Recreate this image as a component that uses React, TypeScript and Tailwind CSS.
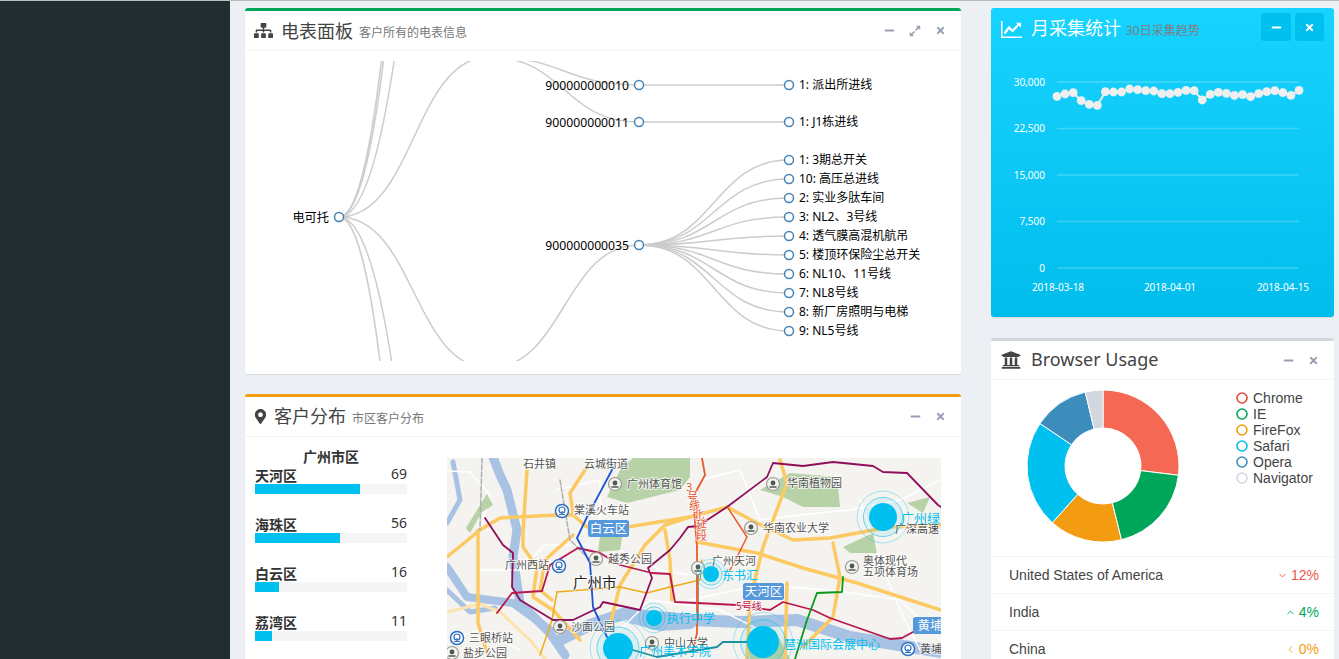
import React from 'react';
import { FaSitemap, FaMapMarkerAlt, FaUniversity, FaMinus, FaTimes, FaExpandAlt } from 'react-icons/fa';
import { ChevronDown, ChevronUp, ChevronLeft } from 'lucide-react';

const yahei = "[font-family:'Noto_Sans','Noto_Sans_CJK_SC',sans-serif]";

const leafRows = [
  { y: 160, label: '1: 3期总开关' },
  { y: 179, label: '10: 高压总进线' },
  { y: 198, label: '2: 实业多肽车间' },
  { y: 217, label: '3: NL2、3号线' },
  { y: 236, label: '4: 透气膜高混机航吊' },
  { y: 255, label: '5: 楼顶环保险尘总开关' },
  { y: 274, label: '6: NL10、11号线' },
  { y: 293, label: '7: NL8号线' },
  { y: 312, label: '8: 新厂房照明与电梯' },
  { y: 331, label: '9: NL5号线' },
];

const curve = (x1: number, y1: number, x2: number, y2: number) => {
  const mid = (x1 + x2) / 2;
  return `M${x1},${y1} C${mid},${y1} ${mid},${y2} ${x2},${y2}`;
};

function TreeNode({ x, y, label, leaf }: { x: number; y: number; label: string; leaf?: boolean }) {
  return (
    <g>
      <circle cx={x} cy={y} r={4.5} fill="#fff" stroke="#4682b4" strokeWidth={1.5} />
      <text x={leaf ? x + 10 : x - 10} y={leaf ? y + 4 : y + 4.5} textAnchor={leaf ? 'start' : 'end'} fontSize={leaf ? 12 : 12.2} fill="#000">
        {label}
      </text>
    </g>
  );
}

function MeterTree() {
  const links = [
    curve(339, 217, 489, -897),
    curve(339, 217, 489, -783),
    curve(339, 217, 489, -395),
    curve(339, 217, 489, 57),
    curve(339, 217, 489, 368),
    curve(339, 217, 489, 1333),
    curve(339, 217, 489, 846),
    curve(489, 57, 639, 85),
    curve(489, 57, 639, 122),
    curve(489, 368, 639, 245),
    curve(639, 85, 789, 85),
    curve(639, 122, 789, 122),
    ...leafRows.map((r) => curve(639, 245, 789, r.y)),
  ];
  return (
    <svg viewBox="245 61 716 300" className="block w-[716px] h-[300px]">
      {links.map((d) => (
        <path key={d} d={d} fill="none" stroke="#ccc" strokeWidth={1.5} />
      ))}
      <TreeNode x={339} y={217} label="电可托" />
      <TreeNode x={639} y={85} label="900000000010" />
      <TreeNode x={639} y={122} label="900000000011" />
      <TreeNode x={639} y={245} label="900000000035" />
      <TreeNode x={789} y={85} label="1: 派出所进线" leaf />
      <TreeNode x={789} y={122} label="1: J1栋进线" leaf />
      {leafRows.map((r) => (
        <TreeNode key={r.y} x={789} y={r.y} label={r.label} leaf />
      ))}
    </svg>
  );
}

function MapLabel({ x, y, text, size = 11, fill = '#555' }: { x: number; y: number; text: string; size?: number; fill?: string }) {
  return (
    <text x={x} y={y + size * 0.36} fontSize={size} fill={fill} stroke="#fff" strokeWidth={2} strokeOpacity={0.75} paintOrder="stroke">
      {text}
    </text>
  );
}

function Rail({ x, y }: { x: number; y: number }) {
  return (
    <g>
      <circle cx={x} cy={y} r={6.5} fill="#fff" stroke="#2f6fc4" strokeWidth={1.5} />
      <circle cx={x} cy={y - 1} r={3} fill="none" stroke="#2f6fc4" strokeWidth={1.2} />
      <path d={`M${x - 3},${y + 3.5} h6 M${x},${y} v3`} stroke="#2f6fc4" strokeWidth={1.2} />
    </g>
  );
}

function Poi({ x, y }: { x: number; y: number }) {
  return (
    <g>
      <circle cx={x} cy={y} r={6.5} fill="#f3f2ef" stroke="#9a9a96" strokeWidth={1.2} />
      <circle cx={x} cy={y - 1} r={2.4} fill="#4e5a4e" />
      <path d={`M${x - 3.5},${y + 3} h7`} stroke="#4e5a4e" strokeWidth={1.5} />
    </g>
  );
}

function AreaTag({ x, y, w, text }: { x: number; y: number; w: number; text: string }) {
  return (
    <g>
      <rect x={x} y={y} width={w} height={17} rx={2.5} fill="#5598db" />
      <text x={x + w / 2} y={y + 13} textAnchor="middle" fontSize={12.5} fill="#fff">
        {text}
      </text>
    </g>
  );
}

function Pulse({ x, y, r, label, lx, ly, size = 12 }: { x: number; y: number; r: number; label: string; lx: number; ly: number; size?: number }) {
  return (
    <g>
      <circle cx={x} cy={y} r={r * 1.85} fill="none" stroke="#00c0ef" strokeOpacity={0.35} strokeWidth={1} />
      <circle cx={x} cy={y} r={r * 1.4} fill="#00c0ef" fillOpacity={0.1} stroke="#00c0ef" strokeOpacity={0.55} strokeWidth={1} />
      <circle cx={x} cy={y} r={r} fill="#00c0ef" />
      <text x={lx} y={ly + 4.5} fontSize={size} fill="#00c0ef">
        {label}
      </text>
    </g>
  );
}

function CityMap() {
  return (
    <svg viewBox="447 458 494 201" className="block w-[494px] h-[201px] bg-[#f4f3f0]">
      <g fill="none" strokeLinejoin="round" strokeLinecap="round">
        {/* rivers */}
        <g stroke="#a8c2e3">
          <polyline strokeWidth={9} points="493,457 500,475 507,490 517,530 513,557 520,603 550,633 565,655" />
          <polyline strokeWidth={5} points="453,462 460,500 447,523" />
          <polyline strokeWidth={8} points="447,567 467,597 513,603 550,630" />
          <polyline strokeWidth={5} points="447,590 470,612 495,608" />
          <polyline strokeWidth={12} points="560,640 590,625 623,614 690,620 740,622 797,620 850,637 941,652" />
          <polyline strokeWidth={14} points="634,617 660,624 690,622" />
        </g>
        {/* white streets */}
        <g stroke="#ffffff" strokeWidth={1.5}>
          <polyline points="447,471 470,472 490,495 480,530" />
          <polyline points="480,570 520,570 545,545 590,545" />
          <polyline points="447,640 480,630 500,640 520,650" />
          <polyline points="555,490 600,480 600,540 660,570 720,580" />
          <polyline points="700,480 740,470 760,520 800,515 850,510 900,500 941,480" />
          <polyline points="690,600 760,585 830,590 900,600 941,640" />
          <polyline points="860,500 880,560 900,610 920,650" />
          <polyline points="610,640 650,600 720,610 780,640" />
        </g>
      </g>
      {/* parks */}
      <g fill="#b7d2a7">
        <polygon points="487,494 493,505 482,512 470,533 466,528 477,510" />
        <polygon points="633,458 690,458 690,477 680,490 627,503 607,497 620,470" />
        <polygon points="760,490 790,473 837,477 840,507 803,507 783,497" />
        <polygon points="843,547 873,533 877,553 850,553" />
        <polygon points="907,503 930,497 923,513" />
        <polygon points="600,535 625,520 620,550 598,552" />
        <polygon points="745,640 775,630 790,659 750,659" />
      </g>
      <g fill="none" strokeLinejoin="round" strokeLinecap="round">
        {/* pale ring */}
        <polyline stroke="#fde3ad" strokeWidth={3} points="447,612 480,604 500,612 530,640 545,659" />
        {/* highways */}
        <g stroke="#fcc962" strokeWidth={3.5}>
          <polyline points="447,557 480,530 500,518 557,515 573,515 587,527 627,527 690,517 727,507 757,523 793,540 830,538 890,527 941,525" />
          <polyline points="697,542 757,553 803,568 857,583 941,610" />
          <polyline points="527,470 523,533 523,547 537,567 533,597 553,610 580,640" />
          <polyline points="478,530 478,623 487,653" />
          <polyline points="833,543 840,577 833,617 803,647" />
          <polyline points="587,467 570,493 573,513" />
          <polyline points="780,460 787,483 763,547 750,600 747,659" />
          <polyline points="787,583 785,659" />
          <polyline points="690,517 665,525 645,545 620,585 610,625" />
          <polyline points="573,535 545,560 540,590 552,600" />
          <polyline points="665,530 670,560 672,600" />
        </g>
        {/* rail */}
        <polyline stroke="#b0b0b0" strokeWidth={1.5} strokeDasharray="5 2" points="482,458 480,530" />
        <polyline stroke="#b0b0b0" strokeWidth={1.5} strokeDasharray="5 2" points="560,480 570,540 590,560" />
        <polyline stroke="#777" strokeWidth={1.5} points="698,573 698,620" />
        {/* metro */}
        <polyline stroke="#f0ab1a" strokeWidth={1.5} points="557,592 620,587 647,593 670,587 700,580 702,560" />
        <polyline stroke="#f0ab1a" strokeWidth={1.5} points="557,592 552,620 540,655" />
        <polyline stroke="#8f0f5c" strokeWidth={1.8} points="485,518 503,545 513,553 512,587 520,600 553,620 573,620 600,607 603,602 640,610 652,578 648,568 670,550 680,538 688,527 698,526 727,507 767,477 773,463 803,466 833,462 873,466 883,472 907,473 938,505 941,507" />
        <polyline stroke="#b9184f" strokeWidth={1.8} points="497,613 512,593 542,591 550,565 578,548 600,553 620,565 652,573 670,574 675,602 697,603 737,605 770,610 783,602 813,610 830,618 890,639 902,638 913,632" />
        <polyline stroke="#1a52d8" strokeWidth={1.8} points="613,468 587,517 577,538 590,563 593,607 607,637" />
        <polyline stroke="#ea5b2b" strokeWidth={1.8} points="702,458 705,475 693,497 697,547 697,633 693,650" />
        <polyline stroke="#ea5b2b" strokeWidth={1.5} points="728,508 747,537 737,557 730,570" />
        <polyline stroke="#0a9a1a" strokeWidth={1.8} points="843,577 842,592 817,593 807,620 795,659" />
        <polyline stroke="#1d8f99" strokeWidth={1.8} points="633,650 657,657 717,647 723,642 747,642" />
      </g>
      <Rail x={562} y={511} />
      <Rail x={559} y={566} />
      <Rail x={457} y={638} />
      <Rail x={908} y={649} />
      <Poi x={615} y={484} />
      <Poi x={773} y={484} />
      <Poi x={751} y={528} />
      <Poi x={698} y={568} />
      <Poi x={852} y={567} />
      <Poi x={596} y={559} />
      <Poi x={560} y={627} />
      <Poi x={652} y={643} />
      <Poi x={452} y={653} />
      <MapLabel x={523} y={464} text="石井镇" />
      <MapLabel x={584} y={464} text="云城街道" />
      <MapLabel x={627} y={484} text="广州体育馆" />
      <MapLabel x={574} y={510} text="棠溪火车站" />
      <MapLabel x={505} y={565} text="广州西站" />
      <MapLabel x={608} y={559} text="越秀公园" />
      <MapLabel x={571} y={627} text="沙面公园" />
      <MapLabel x={469} y={638} text="三眼桥站" />
      <MapLabel x={463} y={653} text="盐步公园" />
      <MapLabel x={787} y={483} text="华南植物园" />
      <MapLabel x={763} y={528} text="华南农业大学" />
      <MapLabel x={712} y={561} text="广州天河" />
      <MapLabel x={863} y={561} text="奥体现代" />
      <MapLabel x={863} y={572} text="五项体育场" />
      <MapLabel x={895} y={529} text="广深高速" size={11} fill="#444" />
      <MapLabel x={664} y={643} text="中山大学" />
      <MapLabel x={920} y={649} text="黄埔" />
      <MapLabel x={573} y={583} text="广州市" size={14.5} fill="#222" />
      <MapLabel x={736} y={606} text="5号线" size={10} fill="#b9184f" />
      {[
        [686, 491, '3'],
        [687, 501, '号'],
        [689, 510, '线'],
        [693, 519, '北'],
        [696, 529, '延'],
        [696, 540, '段'],
      ].map(([x, y, c]) => (
        <text key={c as string} x={x as number} y={y as number} fontSize={11} fill="#e4552a" stroke="#fff" strokeWidth={1.5} strokeOpacity={0.75} paintOrder="stroke">
          {c}
        </text>
      ))}
      <AreaTag x={588} y={520} w={41} text="白云区" />
      <AreaTag x={743} y={583} w={41} text="天河区" />
      <AreaTag x={913} y={617} w={34} text="黄埔" />
      <Pulse x={883} y={517} r={14} label="广州绿地" lx={901} ly={518} size={13} />
      <Pulse x={711} y={574} r={8} label="东书汇" lx={722} ly={575} />
      <Pulse x={654} y={618} r={8} label="执行中学" lx={667} ly={618} />
      <Pulse x={618} y={648} r={15} label="广州美术学院" lx={639} ly={651} />
      <Pulse x={763} y={642} r={16} label="琶洲国际会展中心" lx={784} ly={644} />
    </svg>
  );
}

const districts = [
  { name: '天河区', value: 69, width: 105 },
  { name: '海珠区', value: 56, width: 85 },
  { name: '白云区', value: 16, width: 24 },
  { name: '荔湾区', value: 11, width: 17 },
];

const trend = [79, 72, 68, 92, 103, 106, 65, 66, 66, 57, 59, 62, 63, 71, 71, 67, 61, 62, 90, 73, 67, 70, 76, 74, 80, 71, 65, 62, 68, 76, 61];

function MonthChart() {
  const points = trend.map((v, i) => [1057 + (i * 242) / 30, 70 + v / 3]);
  const grid = [
    { y: 82, label: '30,000' },
    { y: 128.5, label: '22,500' },
    { y: 175, label: '15,000' },
    { y: 221.5, label: '7,500' },
    { y: 268, label: '0' },
  ];
  return (
    <svg viewBox="991 51 343 266" className="block w-[343px] h-[266px]">
      {grid.map((g) => (
        <g key={g.y}>
          <line x1={1057} x2={1299} y1={g.y} y2={g.y} stroke="#fff" strokeOpacity={0.22} strokeWidth={1.5} />
          <text x={1045} y={g.y + 3.5} textAnchor="end" fontSize={10} fill="#fff">
            {g.label}
          </text>
        </g>
      ))}
      <polyline points={points.map((p) => p.join(',')).join(' ')} fill="none" stroke="#efefef" strokeWidth={2} />
      {points.map((p) => (
        <circle key={p[0]} cx={p[0]} cy={p[1]} r={4.4} fill="#efefef" />
      ))}
      <text x={1058} y={291} textAnchor="middle" fontSize={10} fill="#fff">2018-03-18</text>
      <text x={1170} y={291} textAnchor="middle" fontSize={10} fill="#fff">2018-04-01</text>
      <text x={1283} y={291} textAnchor="middle" fontSize={10} fill="#fff">2018-04-15</text>
    </svg>
  );
}

// thin-axis line chart glyph, the packaged one is heavier than the reference
function LineChartIcon() {
  return (
    <svg viewBox="0 0 21 17" className="w-[21px] h-[17px] mr-[9px]" fill="none" stroke="currentColor">
      <path d="M0.75 0 V16.25 H21" strokeWidth={1.5} />
      <path d="M3.5 12.5 L8 6.5 L11.5 10 L18 3" strokeWidth={2.2} />
      <path d="M15 1.8 H20 V6.8 Z" fill="currentColor" stroke="none" />
    </svg>
  );
}

const slices = [
  { label: 'Chrome', from: 0, to: 97, fill: '#f56954', ring: '#e0483e' },
  { label: 'IE', from: 97, to: 166, fill: '#00a65a', ring: '#00a65a' },
  { label: 'FireFox', from: 166, to: 221.8, fill: '#f39c12', ring: '#f39c12' },
  { label: 'Safari', from: 221.8, to: 304, fill: '#00c0ef', ring: '#00c0ef' },
  { label: 'Opera', from: 304, to: 346.5, fill: '#3c8dbc', ring: '#3c8dbc' },
  { label: 'Navigator', from: 346.5, to: 360, fill: '#d2d6de', ring: '#d2d6de' },
];

const polar = (r: number, deg: number) => {
  const a = (deg * Math.PI) / 180;
  return `${(r * Math.sin(a)).toFixed(2)},${(-r * Math.cos(a)).toFixed(2)}`;
};

const slicePath = (from: number, to: number) => {
  const big = to - from > 180 ? 1 : 0;
  return `M${polar(76, from)} A76,76 0 ${big} 1 ${polar(76, to)} L${polar(38, to)} A38,38 0 ${big} 0 ${polar(38, from)} Z`;
};

function Donut() {
  return (
    <svg viewBox="-78 -78 156 156" className="block w-[156px] h-[156px] shrink-0">
      {slices.map((s) => (
        <path key={s.label} d={slicePath(s.from, s.to)} fill={s.fill} stroke="#fff" strokeWidth={1} />
      ))}
    </svg>
  );
}

const countries = [
  { name: 'United States of America', pct: '12%', color: 'text-[#e8594b]', Icon: ChevronDown },
  { name: 'India', pct: '4%', color: 'text-[#00a65a]', Icon: ChevronUp },
  { name: 'China', pct: '0%', color: 'text-[#f39c12]', Icon: ChevronLeft },
];

function BoxTools({ expand }: { expand?: boolean }) {
  return (
    <div className="ml-auto flex items-center text-[#97a0b3]">
      <FaMinus size={11} className="mr-[14px]" />
      {expand && <FaExpandAlt size={12} className="mr-[14px]" />}
      <FaTimes size={11} />
    </div>
  );
}

export default function App() {
  return (
    <div className={`flex h-screen overflow-hidden bg-[#ecf0f5] border-t border-[#bbbbbb] text-[#333] ${yahei}`}>
      <aside className="w-[230px] shrink-0 bg-[#222d32]" />

      <main className="flex items-start pl-[15px] pt-[7px]">
        {/* left column */}
        <div className="w-[716px] shrink-0">
          <section className="bg-white rounded-[3px] border-t-[3px] border-[#00a65a] shadow-[0_1px_1px_rgba(0,0,0,0.1)]">
            <header className="h-[40px] flex items-center pl-[10px] pr-[15px] border-b border-[#f4f4f4]">
              <FaSitemap size={19} className="text-[#444] mr-[8px] -ml-[1px]" />
              <h3 className="text-[18px] leading-none text-[#444]">电表面板</h3>
              <small className="ml-[6px] mt-[4px] text-[12px] text-[#777]">客户所有的电表信息</small>
              <BoxTools expand />
            </header>
            <div className="pt-[10px] pb-[13px]">
              <MeterTree />
            </div>
          </section>

          <section className="mt-[20px] bg-white rounded-[3px] border-t-[3px] border-[#f39c12] shadow-[0_1px_1px_rgba(0,0,0,0.1)]">
            <header className="h-[40px] flex items-center pl-[10px] pr-[15px] border-b border-[#f4f4f4]">
              <FaMapMarkerAlt size={15} className="text-[#444] mr-[6px] -ml-[2px]" />
              <h3 className="text-[18px] leading-none text-[#444] -mt-[2px]">客户分布</h3>
              <small className="ml-[6px] mt-[4px] text-[12px] text-[#777]">市区客户分布</small>
              <BoxTools />
            </header>
            <div className="flex pl-[10px] pr-[20px] pb-[30px]">
              <div className="w-[152px] shrink-0 pt-[11px]">
                <div className="text-center text-[14px] leading-[18px] font-bold text-[#333]">广州市区</div>
                {districts.map((d) => (
                  <div key={d.name} className="mb-[21px]">
                    <div className="h-[18px] flex justify-between text-[#333]">
                      <span className="text-[14px] leading-[20px] font-bold">{d.name}</span>
                      <span className="text-[14px] leading-[16px]">{d.value}</span>
                    </div>
                    <div className="h-[10px] bg-[#f5f5f5]">
                      <div className="h-full bg-[#00c0ef]" style={{ width: d.width }} />
                    </div>
                  </div>
                ))}
              </div>
              <div className="ml-[40px] pt-[21px]">
                <CityMap />
              </div>
            </div>
          </section>
        </div>

        {/* right column */}
        <div className="w-[343px] shrink-0 ml-[30px]">
          <section className="rounded-[3px] bg-gradient-to-b from-[#17d3ff] to-[#00bdec] shadow-[0_1px_1px_rgba(0,0,0,0.1)]">
            <header className="h-[43px] flex items-center pl-[10px] pr-[10px] text-white">
              <LineChartIcon />
              <h3 className="text-[18px] leading-none -mt-[4px]">月采集统计</h3>
              <small className="ml-[5px] mt-[2px] text-[12px] text-[#7d7d82]">30日采集趋势</small>
              <div className="ml-auto flex gap-[4px] self-start mt-[5px]">
                <div className="w-[30px] h-[28px] rounded-[3px] bg-[#00c0ef] flex items-center justify-center">
                  <FaMinus size={11} />
                </div>
                <div className="w-[29px] h-[28px] rounded-[3px] bg-[#00c0ef] flex items-center justify-center">
                  <FaTimes size={11} />
                </div>
              </div>
            </header>
            <MonthChart />
          </section>

          <section className="mt-[21px] bg-white rounded-[3px] border-t-[3px] border-[#d2d6de] shadow-[0_1px_1px_rgba(0,0,0,0.1)]">
            <header className="h-[39px] flex items-center pl-[10px] pr-[15px] border-b border-[#f4f4f4]">
              <FaUniversity size={20} className="text-[#444] mr-[10px]" />
              <h3 className="text-[18px] leading-none text-[#444] -mt-[3px]">Browser Usage</h3>
              <div className="ml-auto flex items-center text-[#97a0b3]">
                <FaMinus size={11} className="mr-[14px]" />
                <FaTimes size={11} />
              </div>
            </header>
            <div className="h-[177px] flex items-start pl-[34px] pt-[8px] border-b border-[#f4f4f4] [font-family:'Liberation_Sans',sans-serif]">
              <Donut />
              <ul className="ml-[55px] mt-[2px]">
                {slices.map((s) => (
                  <li key={s.label} className="h-[16px] flex items-center text-[14px] text-[#444]">
                    <svg viewBox="0 0 12 12" className="w-[12px] h-[12px] mr-[5px]">
                      <circle cx={6} cy={6} r={5} fill="none" stroke={s.ring} strokeWidth={1.6} />
                    </svg>
                    {s.label}
                  </li>
                ))}
              </ul>
            </div>
            <ul className="[font-family:'Liberation_Sans',sans-serif]">
              {countries.map(({ name, pct, color, Icon }) => (
                <li key={name} className="h-[37px] flex items-center justify-between pl-[18px] pr-[15px] border-b border-[#f4f4f4] text-[14px] text-[#444]">
                  <span>{name}</span>
                  <span className={`flex items-center gap-[3px] ${color}`}>
                    <Icon size={11} />
                    {pct}
                  </span>
                </li>
              ))}
            </ul>
          </section>
        </div>
      </main>
    </div>
  );
}
